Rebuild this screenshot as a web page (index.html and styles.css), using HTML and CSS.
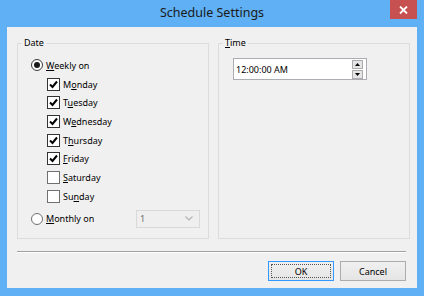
FILE: index.html
```html
<!DOCTYPE html>
<html lang="en">
<head>
    <meta charset="UTF-8">
    <title>Schedule Settings</title>
    <link rel="stylesheet" href="styles.css">
</head>
<body>
    <div class="window">
        <!-- Title bar -->
        <div class="titlebar">
            <span></span>
            <span class="title">Schedule Settings</span>
            <span class="close">
                <svg width="9" height="8" viewBox="0 0 9 8"><path d="M1 0.5 L8 7.5 M8 0.5 L1 7.5" stroke="#fff" stroke-width="1.8"/></svg>
            </span>
        </div>

        <div class="client">
            <div class="groups">
                <!-- Date group -->
                <fieldset class="group">
                    <legend>Date</legend>
                    <div class="date-body">
                        <div class="row">
                            <span class="radio on"></span>
                            <span><u>W</u>eekly on</span>
                        </div>
                        <div class="days">
                            <div class="row"><span class="check on"></span><span>M<u>o</u>nday</span></div>
                            <div class="row"><span class="check on"></span><span>T<u>u</u>esday</span></div>
                            <div class="row"><span class="check on"></span><span>W<u>e</u>dnesday</span></div>
                            <div class="row"><span class="check on"></span><span>T<u>h</u>ursday</span></div>
                            <div class="row"><span class="check on"></span><span><u>F</u>riday</span></div>
                            <div class="row"><span class="check"></span><span><u>S</u>aturday</span></div>
                            <div class="row"><span class="check"></span><span>Su<u>n</u>day</span></div>
                        </div>
                        <div class="row monthly">
                            <span class="radio"></span>
                            <span class="monthly-label"><u>M</u>onthly on</span>
                            <span class="select">
                                <span>1</span>
                                <svg width="8" height="5" viewBox="0 0 8 5"><path d="M0.5 0.5 L4 4 L7.5 0.5" fill="none" stroke="#b4b4b4" stroke-width="1.2"/></svg>
                            </span>
                        </div>
                    </div>
                </fieldset>

                <!-- Time group -->
                <fieldset class="group">
                    <legend><u>T</u>ime</legend>
                    <div class="time-body">
                        <div class="timebox">
                            <span class="time-text">12:00:00 AM</span>
                            <span class="spin">
                                <span class="spin-btn"><svg width="5" height="3" viewBox="0 0 5 3"><path d="M2.5 0 L5 3 L0 3 Z" fill="#000"/></svg></span>
                                <span class="spin-btn"><svg width="5" height="3" viewBox="0 0 5 3"><path d="M0 0 L5 0 L2.5 3 Z" fill="#000"/></svg></span>
                            </span>
                        </div>
                    </div>
                </fieldset>
            </div>

            <div class="separator"></div>

            <div class="buttons">
                <button class="btn default"><span class="focus">OK</span></button>
                <button class="btn">Cancel</button>
            </div>
        </div>
    </div>
</body>
</html>
```

FILE: styles.css
```css
/* Dialog window */
body {
    margin: 0;
    font-family: "Noto Sans", "Open Sans", sans-serif;
    font-size: 9px;
    color: #000;
}
.window {
    width: 424px;
    height: 296px;
    box-sizing: border-box;
    background-color: #5fb0f4;
    padding: 0 7px 8px 7px;
    display: flex;
    flex-direction: column;
}
u {
    text-decoration-thickness: 1px;
    text-underline-offset: 1px;
}

/* Title bar */
.titlebar {
    height: 27px;
    display: grid;
    grid-template-columns: 1fr auto 1fr;
    align-items: start;
}
.title {
    font-size: 12.5px;
    color: #1a1a1a;
    line-height: 27px;
    margin-top: -1px;
}
.close {
    justify-self: end;
    width: 27px;
    height: 19px;
    background-color: #c75050;
    display: flex;
    align-items: center;
    justify-content: center;
}

/* Client area */
.client {
    flex: 1;
    background-color: #f0f0f0;
    padding: 10px 11px 0 10px;
    display: flex;
    flex-direction: column;
}
.groups {
    display: grid;
    grid-template-columns: 192px 192px;
    column-gap: 9px;
    height: 202px;
}
.group {
    margin: 0;
    padding: 0;
    border: 1px solid #dcdcdc;
    min-width: 0;
}
.group legend {
    margin-left: 4px;
    padding: 0 2px;
    line-height: 12px;
}

/* Date group */
.date-body {
    padding: 7px 0 0 13px;
}
.row {
    height: 18.7px;
    display: flex;
    align-items: center;
    gap: 3px;
}
.days {
    padding-left: 16px;
}
.radio {
    width: 10px;
    height: 10px;
    border: 1px solid #3c3c3c;
    border-radius: 50%;
    background-color: #fff;
    display: flex;
    align-items: center;
    justify-content: center;
}
.radio.on::after {
    content: "";
    width: 6px;
    height: 6px;
    border-radius: 50%;
    background-color: #1a1a1a;
}
.radio:not(.on) {
    border-color: #707070;
}
.check {
    width: 11px;
    height: 11px;
    border: 1px solid #333;
    background-color: #fff;
}
.check:not(.on) {
    border-color: #707070;
}
.check.on {
    background: #fff url("data:image/svg+xml,%3Csvg xmlns='http://www.w3.org/2000/svg' width='11' height='11'%3E%3Cpath d='M2 5.5 L4.5 8 L9 2.5' fill='none' stroke='%23000' stroke-width='2'/%3E%3C/svg%3E") no-repeat center;
}
.monthly {
    height: 18px;
    margin-top: 4px;
}
.monthly-label {
    width: 87px;
}
.select {
    height: 16px;
    width: 53px;
    border: 1px solid #d9d9d9;
    background-color: #efefef;
    color: #6d6d6d;
    display: flex;
    align-items: center;
    justify-content: space-between;
    padding: 0 6px 0 3px;
}

/* Time group */
.time-body {
    padding: 9px 0 0 14px;
}
.timebox {
    width: 127px;
    height: 20px;
    border: 1px solid #abadb3;
    background-color: #fff;
    display: flex;
    align-items: center;
    justify-content: space-between;
    padding: 0 3px 0 2px;
}
.spin {
    display: flex;
    flex-direction: column;
    gap: 1px;
}
.spin-btn {
    width: 9px;
    height: 7px;
    border: 1px solid #acacac;
    background-color: #e5e5e5;
    display: flex;
    align-items: center;
    justify-content: center;
}

/* Separator and buttons */
.separator {
    margin-top: 12px;
    height: 0;
    border-top: 1px solid #a0a0a0;
    border-bottom: 1px solid #fff;
}
.buttons {
    margin-top: 8px;
    display: flex;
    justify-content: flex-end;
    gap: 6px;
}
.btn {
    width: 66px;
    height: 20px;
    padding: 0;
    font-family: inherit;
    font-size: 9px;
    color: #000;
    background: linear-gradient(#f0f0f0, #e5e5e5);
    border: 1px solid #acacac;
    border-radius: 0;
}
.btn.default {
    border-color: #3399ff;
    padding: 2px;
}
.focus {
    display: block;
    height: 100%;
    box-sizing: border-box;
    border: 1px dotted #555;
    line-height: 14px;
}
```
